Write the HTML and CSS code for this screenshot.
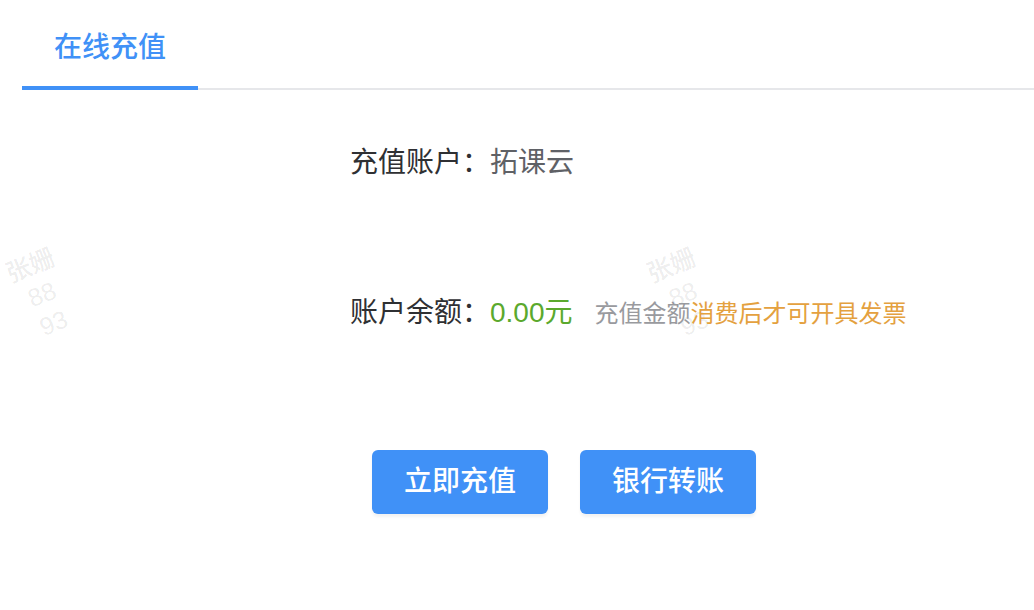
FILE: index.html
```html
<!DOCTYPE html>
<html lang="zh-CN">
<head>
<meta charset="utf-8">
<title>在线充值</title>
<link rel="stylesheet" href="styles.css">
</head>
<body>
<div class="page">
  <div class="watermarks">
    <div class="wm wm-1">张姗<br>88<br>93</div>
    <div class="wm wm-2">张姗<br>88<br>93</div>
  </div>
  <div class="tabs">
    <div class="tab active">在线充值</div>
  </div>
  <div class="form">
    <div class="row row-account">
      <span class="label">充值账户：</span><span class="value">拓课云</span>
    </div>
    <div class="row row-balance">
      <span class="label">账户余额：</span><span class="amount">0.00元</span><span class="tip">充值金额<span class="warn">消费后才可开具发票</span></span>
    </div>
    <div class="actions">
      <button class="btn">立即充值</button>
      <button class="btn">银行转账</button>
    </div>
  </div>
</div>
</body>
</html>
```

FILE: styles.css
```css
html, body {
  margin: 0;
  padding: 0;
  background: #ffffff;
}

body {
  font-family: "Liberation Sans", "Noto Sans CJK SC", sans-serif;
  width: 1034px;
  height: 610px;
  overflow: hidden;
}

.page {
  position: relative;
  height: 610px;
}

.tabs {
  position: relative;
  z-index: 1;
  display: flex;
  margin-left: 22px;
  border-bottom: 2px solid #e6e7ea;
}

.tab {
  width: 176px;
  height: 86px;
  box-sizing: border-box;
  padding-top: 28px;
  font-size: 28px;
  font-weight: 500;
  line-height: 40px;
  text-align: center;
  color: #4091f7;
  margin-bottom: -2px;
}

.tab.active {
  border-bottom: 4px solid #4091f7;
  height: 90px;
}

.form {
  position: relative;
  z-index: 1;
  padding-left: 350px;
  display: flex;
  flex-direction: column;
}

.row {
  display: flex;
  align-items: baseline;
  font-size: 28px;
  line-height: 40px;
  height: 40px;
}

.row-account {
  margin-top: 53px;
}

.row-balance {
  margin-top: 110px;
}

.label {
  color: #2f3033;
}

.value {
  color: #5f6166;
}

.amount {
  color: #5ba92d;
}

.tip {
  margin-left: 22px;
  font-size: 24px;
  color: #999a9e;
}

.warn {
  color: #e4a13f;
}

.actions {
  display: flex;
  gap: 32px;
  margin-top: 117px;
  padding-left: 22px;
}

.btn {
  width: 176px;
  height: 64px;
  border: none;
  border-radius: 6px;
  background: #4091f7;
  color: #ffffff;
  font-family: "Liberation Sans", "Noto Sans CJK SC", sans-serif;
  font-size: 28px;
  font-weight: 500;
  line-height: 40px;
  padding: 0;
  box-shadow: 0 3px 3px rgba(0, 0, 0, 0.05);
  cursor: pointer;
}

.watermarks {
  position: absolute;
  inset: 0;
  z-index: 0;
  pointer-events: none;
}

.wm {
  position: absolute;
  width: 80px;
  height: 93px;
  font-size: 25px;
  font-weight: 500;
  line-height: 31px;
  text-align: center;
  color: rgba(0, 0, 0, 0.085);
  transform: rotate(-22deg);
}

.wm-1 {
  left: 2px;
  top: 248px;
}

.wm-2 {
  left: 643px;
  top: 248px;
}
```
